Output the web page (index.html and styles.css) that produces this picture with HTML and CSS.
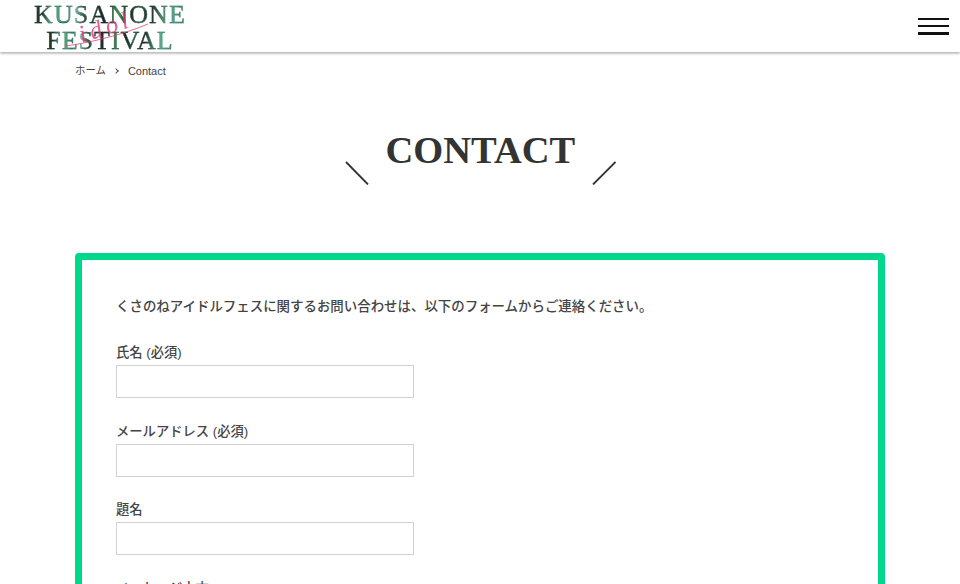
FILE: index.html
```html
<!DOCTYPE html>
<html lang="ja">
<head>
<meta charset="utf-8">
<title>Contact</title>
<link rel="stylesheet" href="styles.css">
</head>
<body>
<header class="site-header">
  <a class="logo" href="#">
    <span class="logo-line logo-line-top">KUSANONE</span>
    <span class="logo-line logo-line-bottom">FESTIVAL</span>
    <span class="logo-idol">idol</span>
    <svg class="logo-swash" viewBox="0 0 90 30" width="90" height="30" aria-hidden="true"><path d="M2 28 C30 24 60 16 84 6" fill="none" stroke="#e0457f" stroke-width=".8"/></svg>
  </a>
  <button class="menu" aria-label="menu"><span></span><span></span><span></span></button>
</header>
<nav class="crumbs"><a class="crumb-home" href="#">ホーム</a><span class="crumb-sep"></span><span>Contact</span></nav>
<div class="title-row">
  <svg class="slash" viewBox="0 0 24 24" width="24" height="24" aria-hidden="true"><path d="M1 1 L23 23.500" stroke="#333" stroke-width="1.800"/></svg>
  <h1>CONTACT</h1>
  <svg class="slash" viewBox="0 0 24 24" width="24" height="24" aria-hidden="true"><path d="M23.500 1 L1 23.500" stroke="#333" stroke-width="1.800"/></svg>
</div>
<main class="panel">
  <p class="intro">くさのねアイドルフェスに関するお問い合わせは、以下のフォームからご連絡ください。</p>
  <form class="form">
    <label class="field">氏名 (必須)<input type="text"></label>
    <label class="field">メールアドレス (必須)<input type="text"></label>
    <label class="field">題名<input type="text"></label>
    <label class="field">メッセージ本文<textarea rows="6"></textarea></label>
  </form>
</main>
</body>
</html>
```
FILE: styles.css
```css
* { box-sizing: border-box; }
html, body { margin: 0; padding: 0; background: #fff; }
body {
  color: #444;
  font-family: "Liberation Sans", "Noto Sans CJK JP", sans-serif;
}
.site-header {
  height: 52px;
  background: #fff;
  box-shadow: 0 1px 3px rgba(0, 0, 0, .4);
  display: flex;
  align-items: center;
  justify-content: space-between;
  padding: 0 11px 0 34px;
}
.logo {
  position: relative;
  display: flex;
  flex-direction: column;
  align-items: center;
  width: 152px;
  height: 52px;
  text-decoration: none;
  font-family: "Liberation Serif", serif;
}
.logo-line {
  display: block;
  white-space: nowrap;
  font-size: 26px;
  line-height: 26px;
  letter-spacing: 1.100px;
  background: linear-gradient(90deg, #2c4a3c 0, #1f2f2a 5%, #6fbf9f 12%, #2f7f63 20%, #7cc4b0 27%, #2a5a44 33%, #1a2623 46%, #3f9150 56%, #1a2623 62%, #2e6a4c 70%, #1a2623 76%, #62b08c 88%, #3c8a70 100%);
  -webkit-background-clip: text;
  background-clip: text;
  color: transparent;
  -webkit-text-stroke: .35px rgba(30, 60, 48, .55);
}
.logo-line-top { margin-top: 2px; }
.logo-line-bottom { letter-spacing: 1px; margin-top: 0; }
.logo-idol {
  position: absolute;
  left: 44px;
  top: 12px;
  font-size: 25px;
  line-height: 30px;
  font-style: italic;
  letter-spacing: 4px;
  color: #d93a78;
  opacity: .8;
  transform: rotate(-18deg);
}
.logo-swash { position: absolute; left: 30px; top: 18px; }
.menu {
  width: 31px;
  height: 17px;
  padding: 0;
  border: 0;
  background: none;
  display: flex;
  flex-direction: column;
  justify-content: space-between;
}
.menu span { display: block; height: 2.700px; background: #111; }
.crumbs {
  display: flex;
  align-items: center;
  padding: 12px 75px 0;
  font-size: 11px;
  line-height: 14px;
  color: #444;
}
.crumbs a { color: #444; text-decoration: none; }
.crumb-home { font-size: 10.400px; }
.crumb-sep {
  width: 4px;
  height: 4px;
  margin: 0 10px 0 8px;
  border-top: 1px solid #555;
  border-right: 1px solid #555;
  transform: rotate(45deg);
}
.title-row {
  display: flex;
  justify-content: center;
  align-items: flex-start;
  gap: 17px;
  height: 120px;
  margin-top: 55px;
}
.title-row h1 {
  margin: -6px 0 0;
  width: 189px;
  text-align: center;
  font-family: "Liberation Serif", serif;
  font-weight: 700;
  font-size: 38.500px;
  line-height: 46px;
  color: #333;
  white-space: nowrap;
}
.slash { margin-top: 28px; flex: none; }
.panel {
  margin: 0 75px;
  border: 7px solid #00d98b;
  border-radius: 4px;
  padding: 37px 34px 34px;
}
.intro {
  margin: 0 0 26px;
  font-size: 13.450px;
  font-weight: 500;
  line-height: 20px;
  color: #444;
}
.form { display: flex; flex-direction: column; gap: 23.500px; }
.field {
  display: flex;
  flex-direction: column;
  gap: 3px;
  font-size: 13.300px;
  font-weight: 500;
  line-height: 19px;
}
.field input, .field textarea {
  width: 298px;
  height: 33px;
  border: 1px solid #d2d2d2;
  background: #fff;
  display: block;
}
.field textarea { height: 120px; width: 100%; }
```
